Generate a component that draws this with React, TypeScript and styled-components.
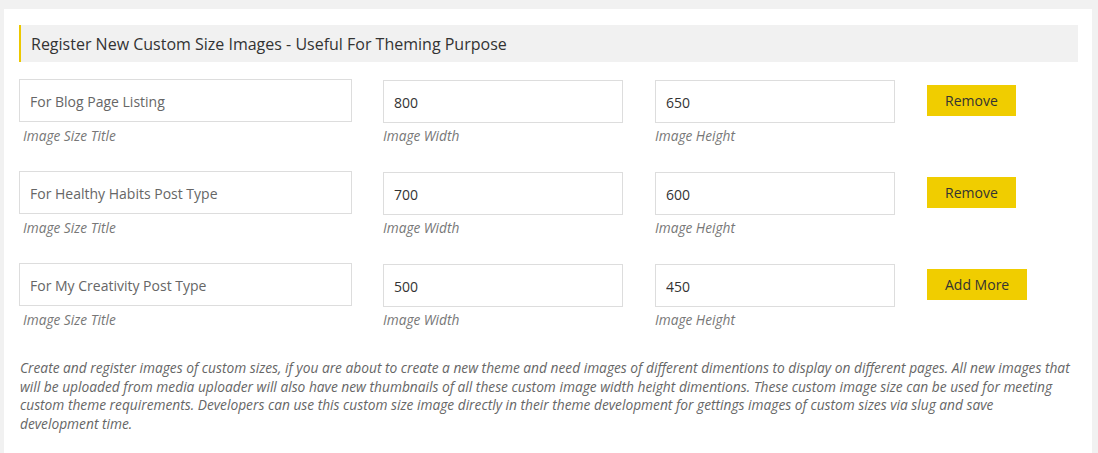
import React from "react";
import styled, { createGlobalStyle } from "styled-components";

const GlobalStyle = createGlobalStyle`
  html, body {
    margin: 0;
    padding: 0;
    background: #f1f1f1;
    font-family: "Open Sans", "Liberation Sans", sans-serif;
  }
`;

const Page = styled.div`
  padding: 9px 6px 0 4px;
  min-height: 453px;
  box-sizing: border-box;
`;

const Panel = styled.div`
  background: #fff;
  padding: 16px 14px 20px 15px;
  min-height: 444px;
  box-sizing: border-box;
`;

const Heading = styled.h3`
  margin: 0 0 17px;
  height: 37px;
  display: flex;
  align-items: center;
  padding: 0 10px;
  background: #f1f1f1;
  border-left: 2px solid #ecc800;
  font-size: 16px;
  font-weight: 400;
  color: #333;
`;

const SizeRow = styled.div`
  display: flex;
  align-items: flex-start;
  height: 92px;
`;

const Field = styled.div<{ $width: number; $gap: number; $offset?: number }>`
  width: ${(p) => p.$width}px;
  margin-right: ${(p) => p.$gap}px;
  margin-top: ${(p) => p.$offset ?? 0}px;
  display: flex;
  flex-direction: column;
`;

const TextInput = styled.input<{ $muted?: boolean }>`
  box-sizing: border-box;
  width: 100%;
  height: 43px;
  border: 1px solid #ddd;
  padding: 1px 10px 0;
  font-family: "Open Sans", "Liberation Sans", sans-serif;
  font-size: 14px;
  color: ${(p) => (p.$muted ? "#666" : "#333")};
  background: #fff;
  outline: none;
`;

const Hint = styled.span<{ $indent?: number; $drop?: number }>`
  margin-top: ${(p) => 4 + (p.$drop ?? 0)}px;
  padding-left: ${(p) => p.$indent ?? 0}px;
  font-size: 13.7px;
  line-height: 18px;
  font-style: italic;
  color: #777;
`;

const ActionButton = styled.button`
  margin-top: 6px;
  height: 31px;
  padding: 0 18px;
  border: none;
  background: #f0cd00;
  color: #333;
  font-family: "Open Sans", "Liberation Sans", sans-serif;
  font-size: 14px;
  cursor: pointer;
`;

const Note = styled.p`
  margin: 4px 6px 0 1px;
  font-size: 13.75px;
  line-height: 18.7px;
  font-style: italic;
  color: #666;
`;

const sizes = [
  { title: "For Blog Page Listing", width: "800", height: "650", action: "Remove" },
  { title: "For Healthy Habits Post Type", width: "700", height: "600", action: "Remove" },
  { title: "For My Creativity Post Type", width: "500", height: "450", action: "Add More" },
];

export default function App() {
  return (
    <Page>
      <GlobalStyle />
      <Panel>
        <Heading>Register New Custom Size Images - Useful For Theming Purpose</Heading>
        {sizes.map((s) => (
          <SizeRow key={s.title}>
            <Field $width={333} $gap={31}>
              <TextInput $muted defaultValue={s.title} />
              <Hint $indent={4} $drop={1}>Image Size Title</Hint>
            </Field>
            <Field $width={240} $gap={32} $offset={1}>
              <TextInput defaultValue={s.width} />
              <Hint>Image Width</Hint>
            </Field>
            <Field $width={240} $gap={32} $offset={1}>
              <TextInput defaultValue={s.height} />
              <Hint>Image Height</Hint>
            </Field>
            <ActionButton>{s.action}</ActionButton>
          </SizeRow>
        ))}
        <Note>
          Create and register images of custom sizes, if you are about to create a new theme and need
          images of different dimentions to display on different pages. All new images that will be
          uploaded from media uploader will also have new thumbnails of all these custom image width
          height dimentions. These custom image size can be used for meeting custom theme requirements.
          Developers can use this custom size image directly in their theme development for gettings
          images of custom sizes via slug and save development time.
        </Note>
      </Panel>
    </Page>
  );
}
